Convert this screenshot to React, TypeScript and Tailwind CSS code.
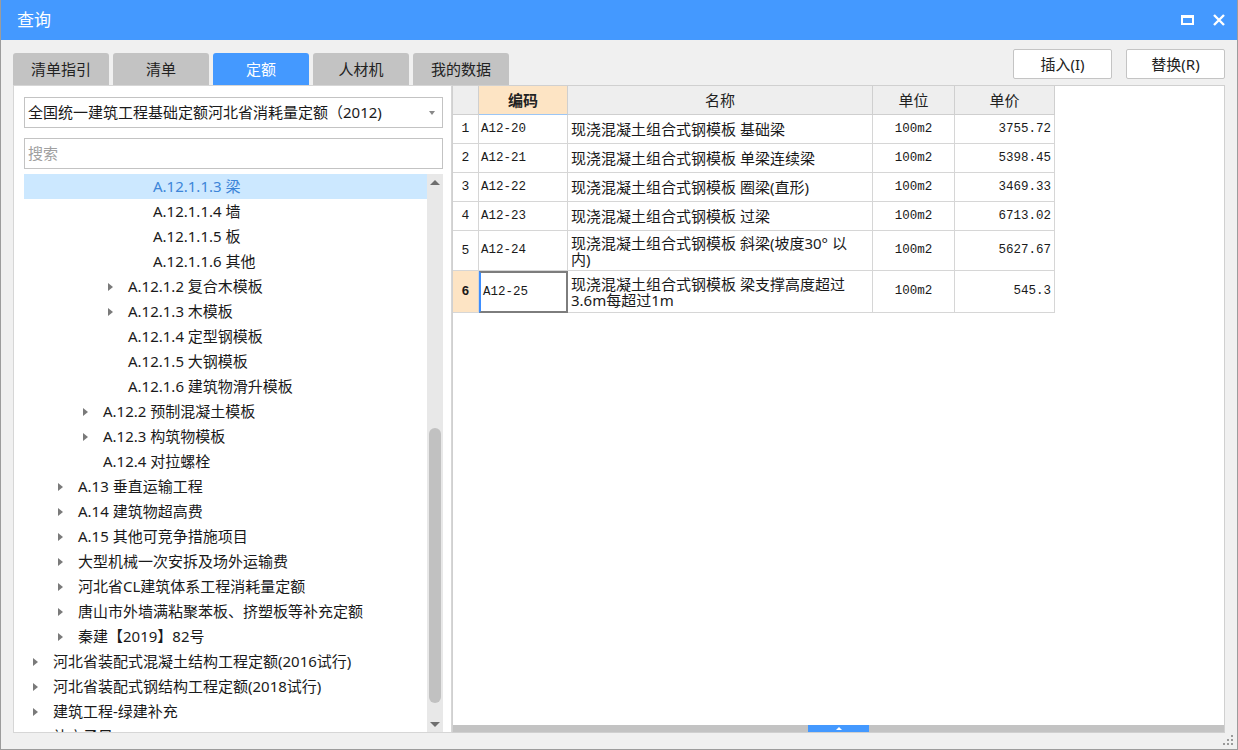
import React from 'react';

const SANS = { fontFamily: '"Noto Sans", "Noto Sans CJK SC", sans-serif' };
const MONO = { fontFamily: '"Liberation Mono", "Noto Sans CJK SC", monospace' };

type TreeRow = { depth: number; label: string; arrow?: boolean; selected?: boolean };

const treeRows: TreeRow[] = [
  { depth: 4, label: 'A.12.1.1.3 梁', selected: true },
  { depth: 4, label: 'A.12.1.1.4 墙' },
  { depth: 4, label: 'A.12.1.1.5 板' },
  { depth: 4, label: 'A.12.1.1.6 其他' },
  { depth: 3, label: 'A.12.1.2 复合木模板', arrow: true },
  { depth: 3, label: 'A.12.1.3 木模板', arrow: true },
  { depth: 3, label: 'A.12.1.4 定型钢模板' },
  { depth: 3, label: 'A.12.1.5 大钢模板' },
  { depth: 3, label: 'A.12.1.6 建筑物滑升模板' },
  { depth: 2, label: 'A.12.2 预制混凝土模板', arrow: true },
  { depth: 2, label: 'A.12.3 构筑物模板', arrow: true },
  { depth: 2, label: 'A.12.4 对拉螺栓' },
  { depth: 1, label: 'A.13 垂直运输工程', arrow: true },
  { depth: 1, label: 'A.14 建筑物超高费', arrow: true },
  { depth: 1, label: 'A.15 其他可竞争措施项目', arrow: true },
  { depth: 1, label: '大型机械一次安拆及场外运输费', arrow: true },
  { depth: 1, label: '河北省CL建筑体系工程消耗量定额', arrow: true },
  { depth: 1, label: '唐山市外墙满粘聚苯板、挤塑板等补充定额', arrow: true },
  { depth: 1, label: '秦建【2019】82号', arrow: true },
  { depth: 0, label: '河北省装配式混凝土结构工程定额(2016试行)', arrow: true },
  { depth: 0, label: '河北省装配式钢结构工程定额(2018试行)', arrow: true },
  { depth: 0, label: '建筑工程-绿建补充', arrow: true },
  { depth: 0, label: '补充子目' },
];

const indent = ['pl-[9px]', 'pl-[34px]', 'pl-[59px]', 'pl-[84px]', 'pl-[109px]'];

type Row = { code: string; name: string[]; unit: string; price: string; h: string };

const rows: Row[] = [
  { code: 'A12-20', name: ['现浇混凝土组合式钢模板 基础梁'], unit: '100m2', price: '3755.72', h: 'h-[29px]' },
  { code: 'A12-21', name: ['现浇混凝土组合式钢模板 单梁连续梁'], unit: '100m2', price: '5398.45', h: 'h-[29px]' },
  { code: 'A12-22', name: ['现浇混凝土组合式钢模板 圈梁(直形)'], unit: '100m2', price: '3469.33', h: 'h-[29px]' },
  { code: 'A12-23', name: ['现浇混凝土组合式钢模板 过梁'], unit: '100m2', price: '6713.02', h: 'h-[29px]' },
  { code: 'A12-24', name: ['现浇混凝土组合式钢模板 斜梁(坡度30° 以', '内)'], unit: '100m2', price: '5627.67', h: 'h-[40px]' },
  { code: 'A12-25', name: ['现浇混凝土组合式钢模板 梁支撑高度超过', '3.6m每超过1m'], unit: '100m2', price: '545.3', h: 'h-[42px]' },
];

const tabs = ['清单指引', '清单', '定额', '人材机', '我的数据'];

function Arrow() {
  return <span className="block w-0 h-0 border-y-[4px] border-y-transparent border-l-[5px] border-l-[#7a7a7a]" />;
}

export default function App() {
  return (
    <div className="w-[1238px] h-[750px] bg-[#f0f0f0] border-x border-b border-[#9c9c9c] flex flex-col overflow-hidden" style={SANS}>
      {/* title bar */}
      <div className="h-[40px] shrink-0 bg-[#4499ff] flex items-center justify-between pl-[16px] pr-[12px]">
        <span className="text-white text-[17px]">查询</span>
        <div className="flex items-center gap-[19px]">
          <span className="block w-[13px] h-[10px] border-2 border-t-[3px] border-white" />
          <svg width="12" height="12" viewBox="0 0 12 12">
            <path d="M1 1 L11 11 M11 1 L1 11" stroke="white" strokeWidth="2.4" />
          </svg>
        </div>
      </div>

      <div className="flex-1 flex flex-col px-[12px]">
        {/* tabs & buttons */}
        <div className="h-[45px] flex justify-between items-end">
          <div className="flex gap-[4px]">
            {tabs.map((t) => (
              <div
                key={t}
                className={
                  t === '定额'
                    ? 'w-[96px] h-[32px] rounded-t-[3px] bg-[#4499ff] text-white text-[15px] flex items-center justify-center'
                    : 'w-[96px] h-[32px] rounded-t-[3px] bg-[#c3c3c3] text-[#222] text-[15px] flex items-center justify-center'
                }
              >
                {t}
              </div>
            ))}
          </div>
          <div className="self-start mt-[9px] flex gap-[14px]">
            <button className="w-[99px] h-[30px] bg-white border border-[#c4c4c4] rounded-[2px] text-[15px] text-[#222]">插入(I)</button>
            <button className="w-[99px] h-[30px] bg-white border border-[#c4c4c4] rounded-[2px] text-[15px] text-[#222]">替换(R)</button>
          </div>
        </div>

        {/* panels */}
        <div className="h-[648px] flex">
          {/* left */}
          <div className="w-[439px] bg-white border border-[#d6d6d6] flex flex-col pl-[10px] pr-[8px]">
            <div className="mt-[11px] h-[31px] border border-[#c3c3c3] flex items-center justify-between pl-[3px] pr-[7px] text-[15px] text-[#1a1a1a]">
              <span>全国统一建筑工程基础定额河北省消耗量定额（2012)</span>
              <span className="block w-0 h-0 border-x-[3px] border-x-transparent border-t-[4px] border-t-[#888]" />
            </div>
            <div className="mt-[10px] h-[31px] border border-[#c3c3c3] flex items-center pl-[3px] text-[15px] text-[#a0a0a0]">搜索</div>
            <div className="mt-[5px] flex-1 min-h-0 flex overflow-hidden">
              <div className="flex-1 overflow-hidden">
                {treeRows.map((r, i) => (
                  <div
                    key={i}
                    className={`h-[25px] shrink-0 flex items-center text-[15px] ${indent[r.depth]} ${
                      r.selected ? 'bg-[#cce8ff] text-[#3d85d8]' : 'text-[#1a1a1a]'
                    }`}
                  >
                    <span className="w-[20px] flex items-center">{r.arrow && <Arrow />}</span>
                    <span className="whitespace-nowrap">{r.label}</span>
                  </div>
                ))}
              </div>
              <div className="w-[16px] bg-[#e8e8e8] flex flex-col items-center">
                <div className="h-[16px] flex items-center justify-center">
                  <span className="block w-0 h-0 border-x-[5px] border-x-transparent border-b-[5px] border-b-[#6e6e6e]" />
                </div>
                <div className="h-[238px]" />
                <div className="h-[275px] w-[12px] bg-[#c1c1c1] rounded-t-[6px] rounded-b-[6px]" />
                <div className="flex-1" />
                <div className="h-[16px] flex items-center justify-center">
                  <span className="block w-0 h-0 border-x-[5px] border-x-transparent border-t-[5px] border-t-[#6e6e6e]" />
                </div>
              </div>
            </div>
          </div>

          {/* right */}
          <div className="flex-1 bg-white border border-[#d0d0d0] flex flex-col">
            <div className="flex-1 min-h-0">
              <div className="w-[602px]">
                {/* header */}
                <div className="grid grid-cols-[26px_89px_305px_82px_100px] h-[29px] bg-[#eeeeee] text-[15px] text-[#222]">
                  <div className="border-r border-b border-[#cfcfcf]" />
                  <div className="border-r border-b border-[#cfcfcf] bg-[#fde4c4] font-bold flex items-center justify-center border-b-[#9cc6f5]">编码</div>
                  <div className="border-r border-b border-[#cfcfcf] flex items-center justify-center">名称</div>
                  <div className="border-r border-b border-[#cfcfcf] flex items-center justify-center">单位</div>
                  <div className="border-r border-b border-[#cfcfcf] flex items-center justify-center">单价</div>
                </div>
                {rows.map((r, i) => {
                  const last = i === rows.length - 1;
                  return (
                    <div key={r.code} className={`grid grid-cols-[26px_89px_305px_82px_100px] ${r.h} text-[#1a1a1a]`}>
                      <div
                        className={`border-r border-b border-[#d6d6d6] flex items-center justify-center text-[13px] ${
                          last ? 'bg-[#fde4c4] font-bold' : 'bg-white'
                        }`}
                        style={MONO}
                      >
                        {i + 1}
                      </div>
                      <div
                        className={`flex items-center pl-[2px] text-[12.5px] ${
                          last ? 'border-2 border-[#7d7d7d] border-l-[#3d8eff]' : 'border-r border-b border-[#d6d6d6]'
                        }`}
                        style={MONO}
                      >
                        {r.code}
                      </div>
                      <div className="border-r border-b border-[#d6d6d6] flex flex-col justify-center pl-[3px] text-[15px] leading-[16px]">
                        {r.name.map((n) => (
                          <span key={n} className="whitespace-nowrap">{n}</span>
                        ))}
                      </div>
                      <div className="border-r border-b border-[#d6d6d6] flex items-center justify-center text-[12.5px]" style={MONO}>
                        {r.unit}
                      </div>
                      <div className="border-r border-b border-[#d6d6d6] flex items-center justify-end pr-[3px] text-[12.5px]" style={MONO}>
                        {r.price}
                      </div>
                    </div>
                  );
                })}
              </div>
            </div>
            <div className="h-[7px] bg-[#c3c3c3] flex">
              <div className="w-[355px]" />
              <div className="w-[61px] bg-[#4499ff] flex items-center justify-center">
                <span className="block w-0 h-0 border-x-[3px] border-x-transparent border-b-[3px] border-b-white" />
              </div>
            </div>
          </div>
        </div>

        {/* bottom strip with resize grip */}
        <div className="flex-1 flex justify-end items-end pb-[3px] pr-0">
          <svg width="11" height="11" viewBox="0 0 11 11" className="-mr-[9px]">
            <rect x="8" y="0" width="2" height="2" fill="#9a9a9a" />
            <rect x="4" y="4" width="2" height="2" fill="#9a9a9a" />
            <rect x="8" y="4" width="2" height="2" fill="#9a9a9a" />
            <rect x="0" y="8" width="2" height="2" fill="#9a9a9a" />
            <rect x="4" y="8" width="2" height="2" fill="#9a9a9a" />
            <rect x="8" y="8" width="2" height="2" fill="#9a9a9a" />
          </svg>
        </div>
      </div>
    </div>
  );
}
